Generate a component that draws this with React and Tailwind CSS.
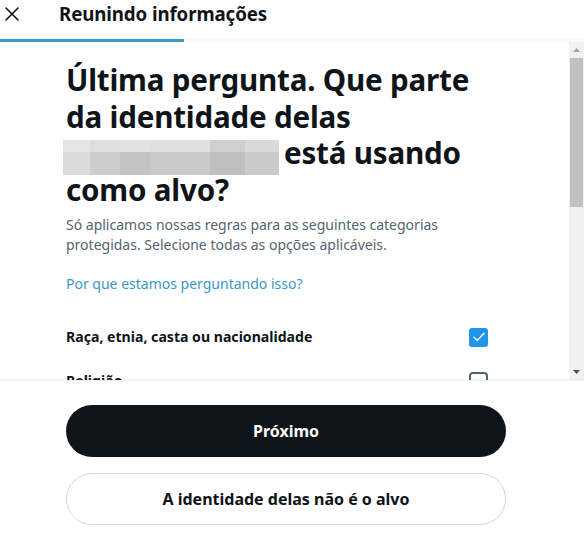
import React from "react";

const font = { fontFamily: '"Noto Sans", "Open Sans", sans-serif' };

function Mosaic() {
  const top = [
    ["w-[27px]", "bg-[#e4e4e4]"],
    ["w-[30px]", "bg-[#dedede]"],
    ["w-[30px]", "bg-[#e2e2e2]"],
    ["w-[60px]", "bg-[#e0e0e0]"],
    ["w-[35px]", "bg-[#cfcfcf]"],
    ["w-[34px]", "bg-[#dadada]"],
  ];
  const bottom = [
    ["w-[27px]", "bg-[#dcdcdc]"],
    ["w-[30px]", "bg-[#cdcdcd]"],
    ["w-[30px]", "bg-[#c4c4c4]"],
    ["w-[60px]", "bg-[#cacaca]"],
    ["w-[35px]", "bg-[#bfbfbf]"],
    ["w-[34px]", "bg-[#cbcbcb]"],
  ];
  return (
    <span className="inline-flex flex-col w-[216px] h-[35px] align-top mt-[5px] mb-[-5px] ml-[-3px] mr-[5px] overflow-hidden">
      <span className="flex h-[12px]">
        {top.map(([w, c], i) => (
          <span key={i} className={`${w} ${c} h-full`} />
        ))}
      </span>
      <span className="flex h-[23px]">
        {bottom.map(([w, c], i) => (
          <span key={i} className={`${w} ${c} h-full`} />
        ))}
      </span>
    </span>
  );
}

function Scrollbar() {
  return (
    <div className="w-[15px] shrink-0 bg-[#f1f1f1] flex flex-col">
      <div className="h-[16px] flex items-center justify-center">
        <svg width="7" height="4" viewBox="0 0 7 4">
          <path d="M0 4 L3.5 0 L7 4 Z" fill="#a3a3a3" />
        </svg>
      </div>
      <div className="mx-[1px] h-[149px] bg-[#c1c1c1]" />
      <div className="flex-1" />
      <div className="h-[16px] flex items-center justify-center">
        <svg width="7" height="4" viewBox="0 0 7 4">
          <path d="M0 0 L7 0 L3.5 4 Z" fill="#505050" />
        </svg>
      </div>
    </div>
  );
}

export default function App() {
  return (
    <div className="w-[584px] h-[547px] bg-white flex flex-col overflow-hidden text-[#0f1419]" style={font}>
      {/* Header */}
      <div className="h-[42px] shrink-0 flex flex-col">
        <div className="h-[39px] flex items-center">
          <div className="w-[59px] pl-[4px] flex items-center h-full pb-[11px]">
            <svg width="16" height="16" viewBox="0 0 16 16" fill="none">
              <path d="M2 2 L14 14 M14 2 L2 14" stroke="#0f1419" strokeWidth="1.6" strokeLinecap="round" />
            </svg>
          </div>
          <div className="text-[18.7px] font-bold tracking-[-0.1px] pb-[11px]">Reunindo informações</div>
        </div>
        <div className="h-[3px] bg-[#f7fbfd]">
          <div className="h-full w-[184px] bg-[#3b9ac6]" />
        </div>
      </div>

      {/* Scroll area */}
      <div className="h-[338px] shrink-0 flex">
        <div className="flex-1 overflow-hidden pl-[66px] pr-[63px]">
          <h1 className="mt-[20px] text-[29.6px] leading-[36.5px] font-bold tracking-[-0.2px]">
            Última pergunta. Que parte da identidade delas <Mosaic />está usando como alvo?
          </h1>
          <p className="mt-[7px] text-[14px] leading-[19.5px] text-[#536471]">
            Só aplicamos nossas regras para as seguintes categorias protegidas. Selecione todas as opções aplicáveis.
          </p>
          <p className="mt-[20px] text-[14px] leading-[20px] text-[#3b98c8]">Por que estamos perguntando isso?</p>
          <div className="mt-[32px] flex items-center justify-between pr-[18px] h-[22px]">
            <span className="text-[14.1px] font-bold">Raça, etnia, casta ou nacionalidade</span>
            <span className="w-[19px] h-[19px] rounded-[3px] bg-[#1d95e8] flex items-center justify-center">
              <svg width="12" height="10" viewBox="0 0 12 10" fill="none">
                <path d="M1 5.2 L4.3 8.5 L11 1.2" stroke="white" strokeWidth="1.4" strokeLinecap="round" strokeLinejoin="round" />
              </svg>
            </span>
          </div>
          <div className="mt-[22px] flex items-center justify-between pr-[18px] h-[22px]">
            <span className="text-[14.1px] font-bold">Religião</span>
            <span className="w-[19px] h-[19px] rounded-[4px] border-2 border-[#536471]" />
          </div>
        </div>
        <Scrollbar />
      </div>

      {/* Footer */}
      <div className="flex-1 border-t border-[#eff3f4] shadow-[0_-1px_2px_rgba(0,0,0,0.04)] px-[66px] pt-[24px] pr-[78px] flex flex-col gap-[16px]">
        <button className="h-[52px] w-[440px] rounded-full bg-[#0f1419] text-white text-[16px] font-bold">
          Próximo
        </button>
        <button className="h-[52px] w-[440px] rounded-full border border-[#cfd9de] bg-white text-[#0f1419] text-[16px] font-bold">
          A identidade delas não é o alvo
        </button>
      </div>
    </div>
  );
}
